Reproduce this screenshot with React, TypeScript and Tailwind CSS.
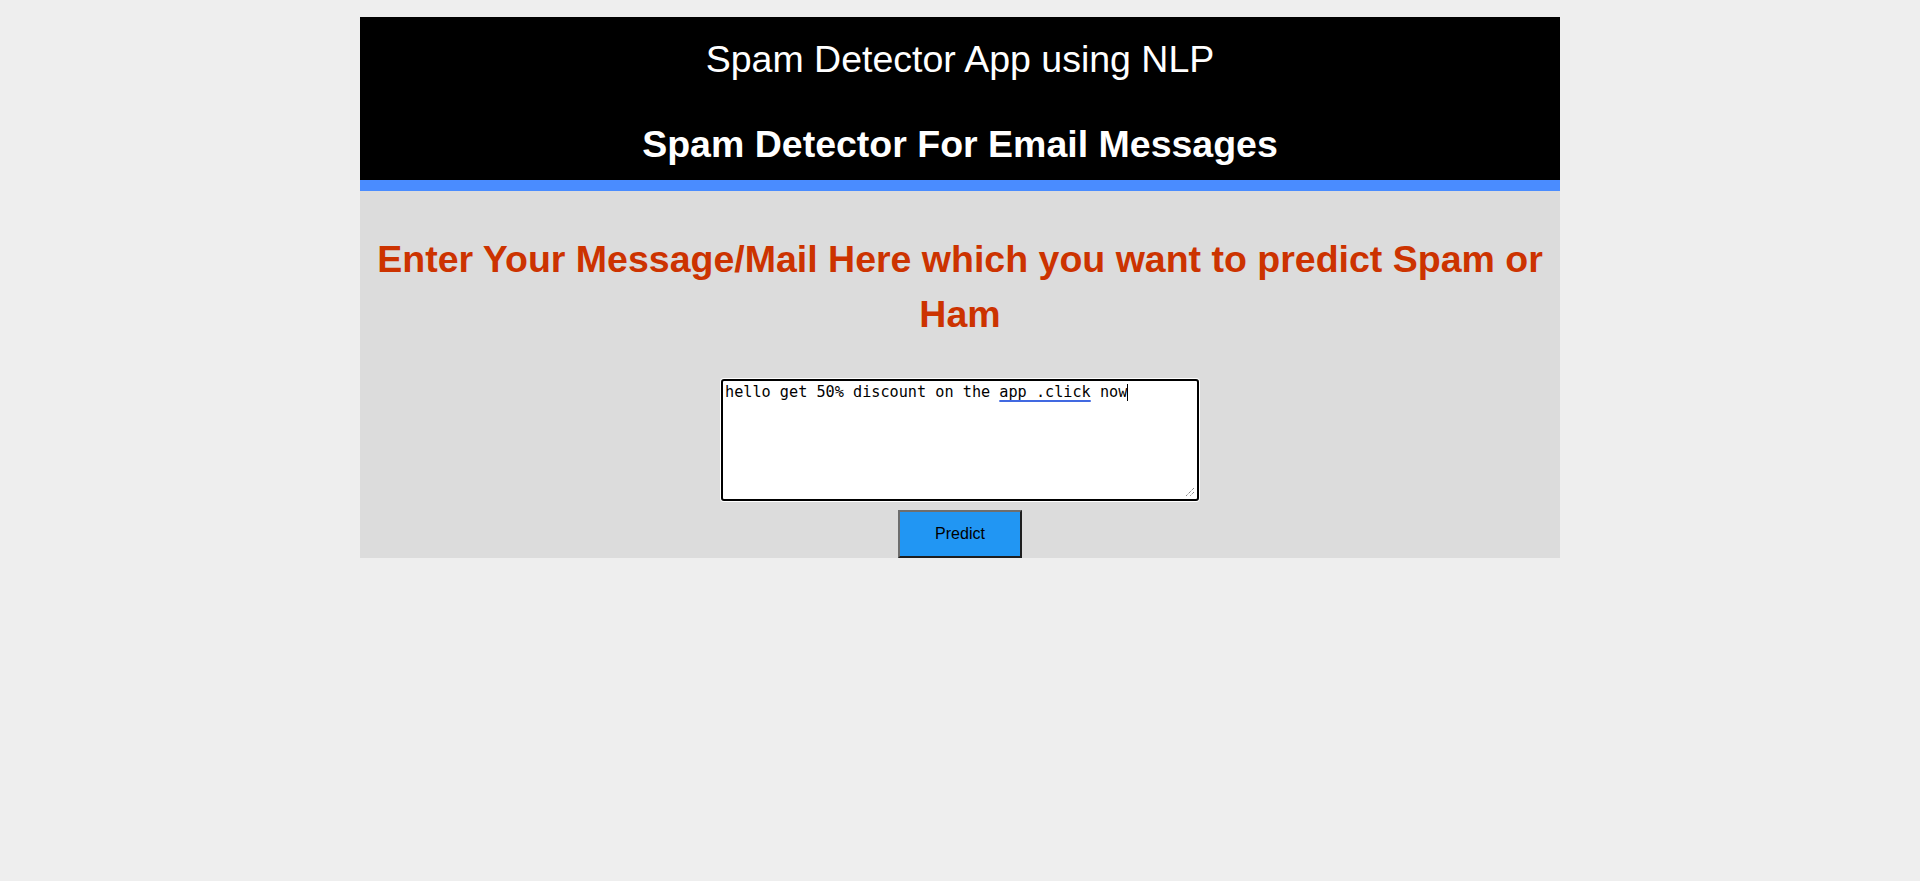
export default function App() {
  return (
    <div className="min-h-screen bg-[#eeeeee] pt-[17px] font-['Liberation_Sans',Arial,sans-serif]">
      <div className="w-[1200px] mx-auto">
        <header className="bg-black text-white text-center pt-[21px] pb-[15px]">
          <h1 className="text-[37.5px] leading-[42px] font-normal">Spam Detector App using NLP</h1>
          <h2 className="mt-[43px] text-[37.5px] leading-[42px] font-bold">Spam Detector For Email Messages</h2>
        </header>
        <div className="h-[11px] bg-[#4a8cff]" />
        <section className="bg-[#dcdcdc] text-center pt-[41px] px-3">
          <h2 className="text-[37.5px] leading-[55px] font-bold text-[#cc3300]">
            Enter Your Message/Mail Here which you want to predict Spam or Ham
          </h2>
          <div
            role="textbox"
            className="relative mt-[37px] mx-auto w-[478px] h-[122px] bg-white border-2 border-black rounded-[3px] shadow-[0_0_0_1px_white] p-[2px] text-left text-black font-['DejaVu_Sans_Mono',monospace] text-[15.2px] leading-[18px]"
          >
            <span>hello get 50% discount on the </span>
            <span className="underline decoration-[#4169e1] decoration-2 underline-offset-[3px]">app .click</span>
            <span> now</span>
            <span className="inline-block w-px h-[17px] bg-black align-[-4px]" />
            <svg className="absolute right-[2px] bottom-[2px]" width="12" height="12" viewBox="0 0 12 12">
              <path d="M11 3 L3 11 M11 7 L7 11" stroke="#555" strokeWidth="1" strokeDasharray="1 1" fill="none" />
            </svg>
          </div>
          <button
            type="button"
            className="mt-[9px] w-[124px] h-[48px] bg-[#2196f3] text-black text-[16px] border-2 border-t-[#6e6e6e] border-l-[#6e6e6e] border-b-[#1e1e1e] border-r-[#1e1e1e] align-top"
          >
            Predict
          </button>
        </section>
      </div>
    </div>
  )
}
